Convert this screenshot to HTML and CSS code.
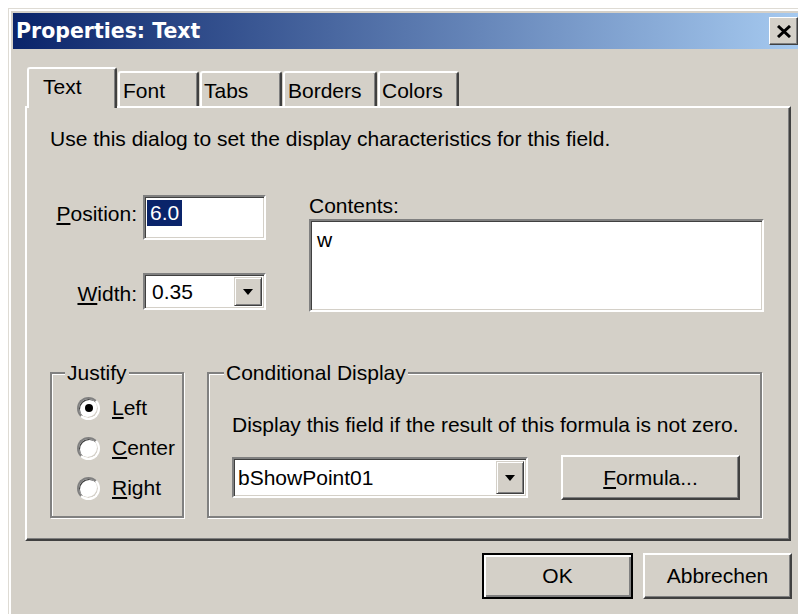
FILE: index.html
```html
<!DOCTYPE html>
<html lang="en">
<head>
<meta charset="utf-8">
<title>Properties: Text</title>
<link rel="stylesheet" href="styles.css">
</head>
<body>
<div class="window">
  <div class="titlebar">
    <span class="title">Properties: Text</span>
    <button class="close" type="button" aria-label="Close">
      <svg width="16" height="13" viewBox="0 0 16 13"><path d="M2 1 L14 12 M14 1 L2 12" stroke="#000" stroke-width="3" fill="none"/></svg>
    </button>
  </div>
  <div class="client">
    <div class="tabs">
      <div class="tab tab-text active">Text</div>
      <div class="tab tab-font">Font</div>
      <div class="tab tab-tabs">Tabs</div>
      <div class="tab tab-borders">Borders</div>
      <div class="tab tab-colors">Colors</div>
    </div>
    <div class="panel">
      <p class="intro">Use this dialog to set the display characteristics for this field.</p>
      <div class="fields">
        <div class="left">
          <div class="row row-pos">
            <span class="lbl"><u>P</u>osition:</span>
            <div class="sunken edit"><span class="sel">6.0</span></div>
          </div>
          <div class="row row-width">
            <span class="lbl"><u>W</u>idth:</span>
            <div class="sunken combo combo-width"><span class="val">0.35</span><span class="drop"><i class="arrow"></i></span></div>
          </div>
        </div>
        <div class="contents">
          <div class="lbl-top">Contents:</div>
          <div class="sunken memo">w</div>
        </div>
      </div>
      <div class="groups">
        <fieldset class="group justify">
          <legend>Justify</legend>
          <div class="radios">
            <div class="radio-row"><span class="radio checked"></span><span><u>L</u>eft</span></div>
            <div class="radio-row"><span class="radio"></span><span><u>C</u>enter</span></div>
            <div class="radio-row"><span class="radio"></span><span><u>R</u>ight</span></div>
          </div>
        </fieldset>
        <fieldset class="group cond">
          <legend>Conditional Display</legend>
          <div class="cond-body">
            <p class="cond-text">Display this field if the result of this formula is not zero.</p>
            <div class="cond-row">
              <div class="sunken combo combo-formula"><span class="val">bShowPoint01</span><span class="drop"><i class="arrow"></i></span></div>
              <button class="btn formula" type="button"><u>F</u>ormula...</button>
            </div>
          </div>
        </fieldset>
      </div>
    </div>
    <div class="actions">
      <button class="btn default ok" type="button">OK</button>
      <button class="btn cancel" type="button">Abbrechen</button>
    </div>
  </div>
</div>
</body>
</html>
```

FILE: styles.css
```css
html, body {
  margin: 0;
  padding: 0;
  background: #ffffff;
  overflow: hidden;
}

body {
  width: 798px;
  height: 614px;
  font-family: "Liberation Sans", Arial, sans-serif;
  font-size: 21px;
  line-height: 24px;
  color: #000;
}

/* window frame (runs off the right and bottom edges) */
.window {
  box-sizing: border-box;
  width: 798px;
  height: 606px;
  margin: 8px 0 0 8px;
  padding: 4px;
  background: #d4d0c8;
  border-left: 1px solid #dedbd4;
  border-top: 1px solid #dedbd4;
  box-shadow: inset 2px 2px #ffffff;
}

.titlebar {
  height: 36px;
  display: flex;
  align-items: center;
  justify-content: space-between;
  background: linear-gradient(to right, #0a246a, #a6caf0);
}

.title {
  padding-left: 3px;
  font-family: "DejaVu Sans", Verdana, sans-serif;
  font-weight: bold;
  font-size: 20.5px;
  color: #ffffff;
}

.close {
  box-sizing: border-box;
  width: 29px;
  height: 28px;
  margin-right: 4px;
  padding: 0;
  display: flex;
  align-items: center;
  justify-content: center;
  background: #d4d0c8;
  border: 1px solid;
  border-color: #ffffff #404040 #404040 #ffffff;
  box-shadow: inset -1px -1px #808080;
}

.close svg {
  display: block;
  margin: 0 0 0 1px;
}

/* area below the title bar */
.client {
  padding: 18px 10px 0 12px;
}

/* tab strip */
.tabs {
  display: flex;
  align-items: flex-end;
  gap: 1px;
  margin-left: 2px;
  height: 39px;
  position: relative;
  z-index: 1;
}

.tab {
  box-sizing: border-box;
  height: 35px;
  padding: 6px 0 0 3px;
  background: #d4d0c8;
  border-top: 2px solid #ffffff;
  border-left: 2px solid #ffffff;
  border-right: 2px solid #404040;
  border-radius: 3px 3px 0 0;
  box-shadow: inset -1px 0 #808080;
  white-space: nowrap;
}

.tab.active {
  height: 41px;
  margin-bottom: -2px;
  padding-left: 14px;
}

.tab-text { width: 90px; }
.tab-font { width: 81px; }
.tab-tabs { width: 82px; padding-left: 2px; }
.tab-borders { width: 94px; }
.tab-colors { width: 81px; padding-left: 2px; }

/* tab page */
.panel {
  box-sizing: border-box;
  width: 766px;
  height: 435px;
  padding: 19px 0 0 23px;
  border: 2px solid;
  border-color: #ffffff #404040 #404040 #ffffff;
  box-shadow: inset -1px -1px #808080;
}

.intro {
  margin: 0;
}

.fields {
  display: flex;
  gap: 43px;
  margin-top: 43px;
}

.left {
  margin-top: 1px;
}

.row {
  display: flex;
  align-items: flex-start;
}

.lbl {
  width: 87px;
  margin-right: 6px;
  text-align: right;
  white-space: nowrap;
}

.row-pos .lbl { padding-top: 7px; }
.row-width { margin-top: 33px; }
.row-width .lbl { padding-top: 9px; }

u {
  text-decoration-thickness: 2px;
  text-underline-offset: 2px;
}

/* sunken field */
.sunken {
  box-sizing: border-box;
  background: #ffffff;
  border: 2px solid;
  border-color: #808080 #ffffff #ffffff #808080;
  box-shadow: inset 1px 1px #404040, inset -1px -1px #d4d0c8;
}

.edit {
  width: 123px;
  height: 45px;
  padding: 3px 0 0 2px;
}

.sel {
  display: inline-block;
  height: 26px;
  padding: 1px 3px 0;
  box-sizing: border-box;
  background: #0a246a;
  color: #ffffff;
}

.combo {
  display: flex;
  align-items: center;
  justify-content: space-between;
}

.combo-width {
  width: 123px;
  height: 37px;
  padding-left: 7px;
}

.combo-formula {
  width: 296px;
  height: 41px;
  padding-left: 4px;
}

.drop {
  box-sizing: border-box;
  flex: none;
  width: 28px;
  height: calc(100% - 4px);
  margin-right: 2px;
  display: flex;
  align-items: center;
  justify-content: center;
  background: #d4d0c8;
  border: 1px solid;
  border-color: #d4d0c8 #404040 #404040 #d4d0c8;
  box-shadow: inset 1px 1px #ffffff, inset -1px -1px #808080;
}

.arrow {
  display: block;
  width: 0;
  height: 0;
  border-left: 5px solid transparent;
  border-right: 5px solid transparent;
  border-top: 6px solid #000;
}

.lbl-top {
  height: 24px;
}

.memo {
  width: 455px;
  height: 93px;
  margin-top: 1px;
  padding: 7px 0 0 6px;
}

/* group boxes */
.groups {
  display: flex;
  gap: 23px;
  margin-top: 49px;
}

.group {
  box-sizing: border-box;
  height: 157px;
  margin: 0;
  padding: 0;
  min-width: 0;
  border: 2px solid #808080;
  box-shadow: inset 1px 1px #ffffff, 1px 1px #ffffff;
}

.group legend {
  padding: 0 2px;
  background: #d4d0c8;
  line-height: 24px;
}

.justify { width: 134px; }
.justify legend { margin-left: 13px; }

.cond { width: 555px; }
.cond legend { margin-left: 15px; }

.radios {
  display: flex;
  flex-direction: column;
  padding: 3px 0 0 25px;
}

.radio-row {
  display: flex;
  align-items: center;
  gap: 12px;
  height: 40px;
}

.radio {
  box-sizing: border-box;
  flex: none;
  width: 23px;
  height: 23px;
  border-radius: 50%;
  background: #ffffff;
  border: 2px solid;
  border-color: #808080 #ffffff #ffffff #808080;
  box-shadow: inset 1px 1px #404040, inset -1px -1px #d4d0c8;
  display: flex;
  align-items: center;
  justify-content: center;
}

.radio.checked::after {
  content: "";
  width: 8px;
  height: 8px;
  border-radius: 50%;
  background: #000;
}

.cond-body {
  padding: 28px 0 0 23px;
}

.cond-text {
  margin: 0;
}

.cond-row {
  display: flex;
  align-items: center;
  gap: 33px;
  margin-top: 18px;
}

/* push buttons */
.btn {
  box-sizing: border-box;
  padding: 0;
  font: inherit;
  color: #000;
  background: #d4d0c8;
  border: 2px solid;
  border-color: #ffffff #404040 #404040 #ffffff;
  box-shadow: inset -1px -1px #808080;
}

.formula {
  width: 179px;
  height: 45px;
}

.btn.default {
  border: 2px solid #000;
  box-shadow: inset 2px 2px #ffffff, inset -2px -2px #808080;
}

.actions {
  display: flex;
  justify-content: flex-end;
  gap: 10px;
  width: 767px;
  margin-top: 12px;
}

.ok {
  width: 151px;
  height: 46px;
}

.cancel {
  width: 149px;
  height: 46px;
}
```
